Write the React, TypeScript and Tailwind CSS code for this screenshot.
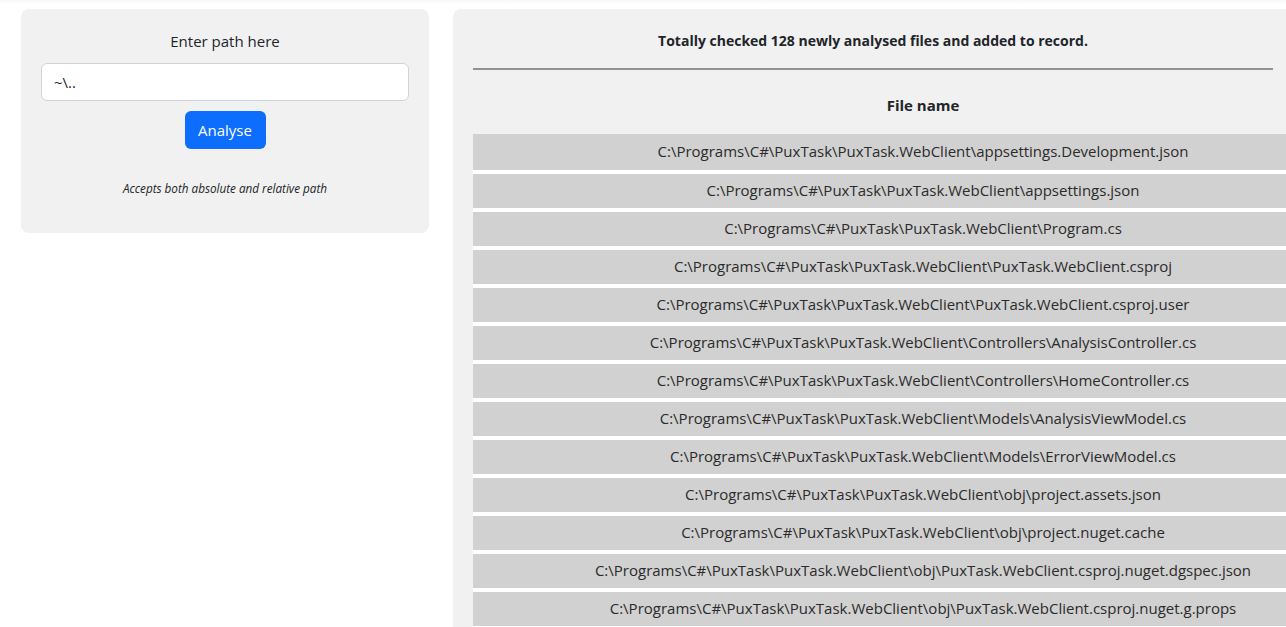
import React from "react";

const files = [
  "C:\\Programs\\C#\\PuxTask\\PuxTask.WebClient\\appsettings.Development.json",
  "C:\\Programs\\C#\\PuxTask\\PuxTask.WebClient\\appsettings.json",
  "C:\\Programs\\C#\\PuxTask\\PuxTask.WebClient\\Program.cs",
  "C:\\Programs\\C#\\PuxTask\\PuxTask.WebClient\\PuxTask.WebClient.csproj",
  "C:\\Programs\\C#\\PuxTask\\PuxTask.WebClient\\PuxTask.WebClient.csproj.user",
  "C:\\Programs\\C#\\PuxTask\\PuxTask.WebClient\\Controllers\\AnalysisController.cs",
  "C:\\Programs\\C#\\PuxTask\\PuxTask.WebClient\\Controllers\\HomeController.cs",
  "C:\\Programs\\C#\\PuxTask\\PuxTask.WebClient\\Models\\AnalysisViewModel.cs",
  "C:\\Programs\\C#\\PuxTask\\PuxTask.WebClient\\Models\\ErrorViewModel.cs",
  "C:\\Programs\\C#\\PuxTask\\PuxTask.WebClient\\obj\\project.assets.json",
  "C:\\Programs\\C#\\PuxTask\\PuxTask.WebClient\\obj\\project.nuget.cache",
  "C:\\Programs\\C#\\PuxTask\\PuxTask.WebClient\\obj\\PuxTask.WebClient.csproj.nuget.dgspec.json",
  "C:\\Programs\\C#\\PuxTask\\PuxTask.WebClient\\obj\\PuxTask.WebClient.csproj.nuget.g.props",
];

export default function App() {
  return (
    <div className="h-[627px] w-[1286px] overflow-hidden bg-white font-['Open_Sans',sans-serif] text-[#212529]">
      <div className="h-[4px] bg-gradient-to-b from-[#f7f7f7] to-white" />
      <div className="mt-[5px] flex items-start gap-[24px] pl-[21px]">
        {/* path form */}
        <div className="flex w-[408px] shrink-0 flex-col items-center rounded-lg bg-[#f1f1f1] px-[20px] pt-[20px] pb-[36px]">
          <label htmlFor="path" className="text-[15px] leading-[24px]">
            Enter path here
          </label>
          <input
            id="path"
            type="text"
            defaultValue="~\.."
            className="mt-[10px] h-[38px] w-full rounded-md border border-[#ced4da] bg-white px-[12px] text-[15px] text-[#212529] focus:outline-none"
          />
          <button
            type="submit"
            className="mt-[10px] h-[38px] w-[81px] rounded-md bg-[#0d6efd] text-[15px] text-white"
          >
            Analyse
          </button>
          <p className="mt-[30px] text-[11.7px] italic leading-[18px]">
            Accepts both absolute and relative path
          </p>
        </div>

        {/* results */}
        <div className="h-[640px] w-[840px] shrink-0 rounded-tl-lg bg-[#f1f1f1] px-[20px] pt-[20px]">
          <p className="text-center text-[14px] font-bold leading-[24px]">
            Totally checked 128 newly analysed files and added to record.
          </p>
          <hr className="mt-[15px] border-t-2 border-[#929292]" />
          <table className="w-[900px] border-collapse text-center">
            <thead>
              <tr>
                <th className="pt-[23px] pb-[17px] text-[15px] font-bold leading-[24px]">File name</th>
              </tr>
            </thead>
            <tbody>
              {files.map((f) => (
                <tr key={f} className="border-b-4 border-white bg-[#d1d1d1]">
                  <td className="h-[38px] pb-[2px] text-[15px] leading-[24px] text-[#2b2b2b]">{f}</td>
                </tr>
              ))}
            </tbody>
          </table>
        </div>
      </div>
    </div>
  );
}
